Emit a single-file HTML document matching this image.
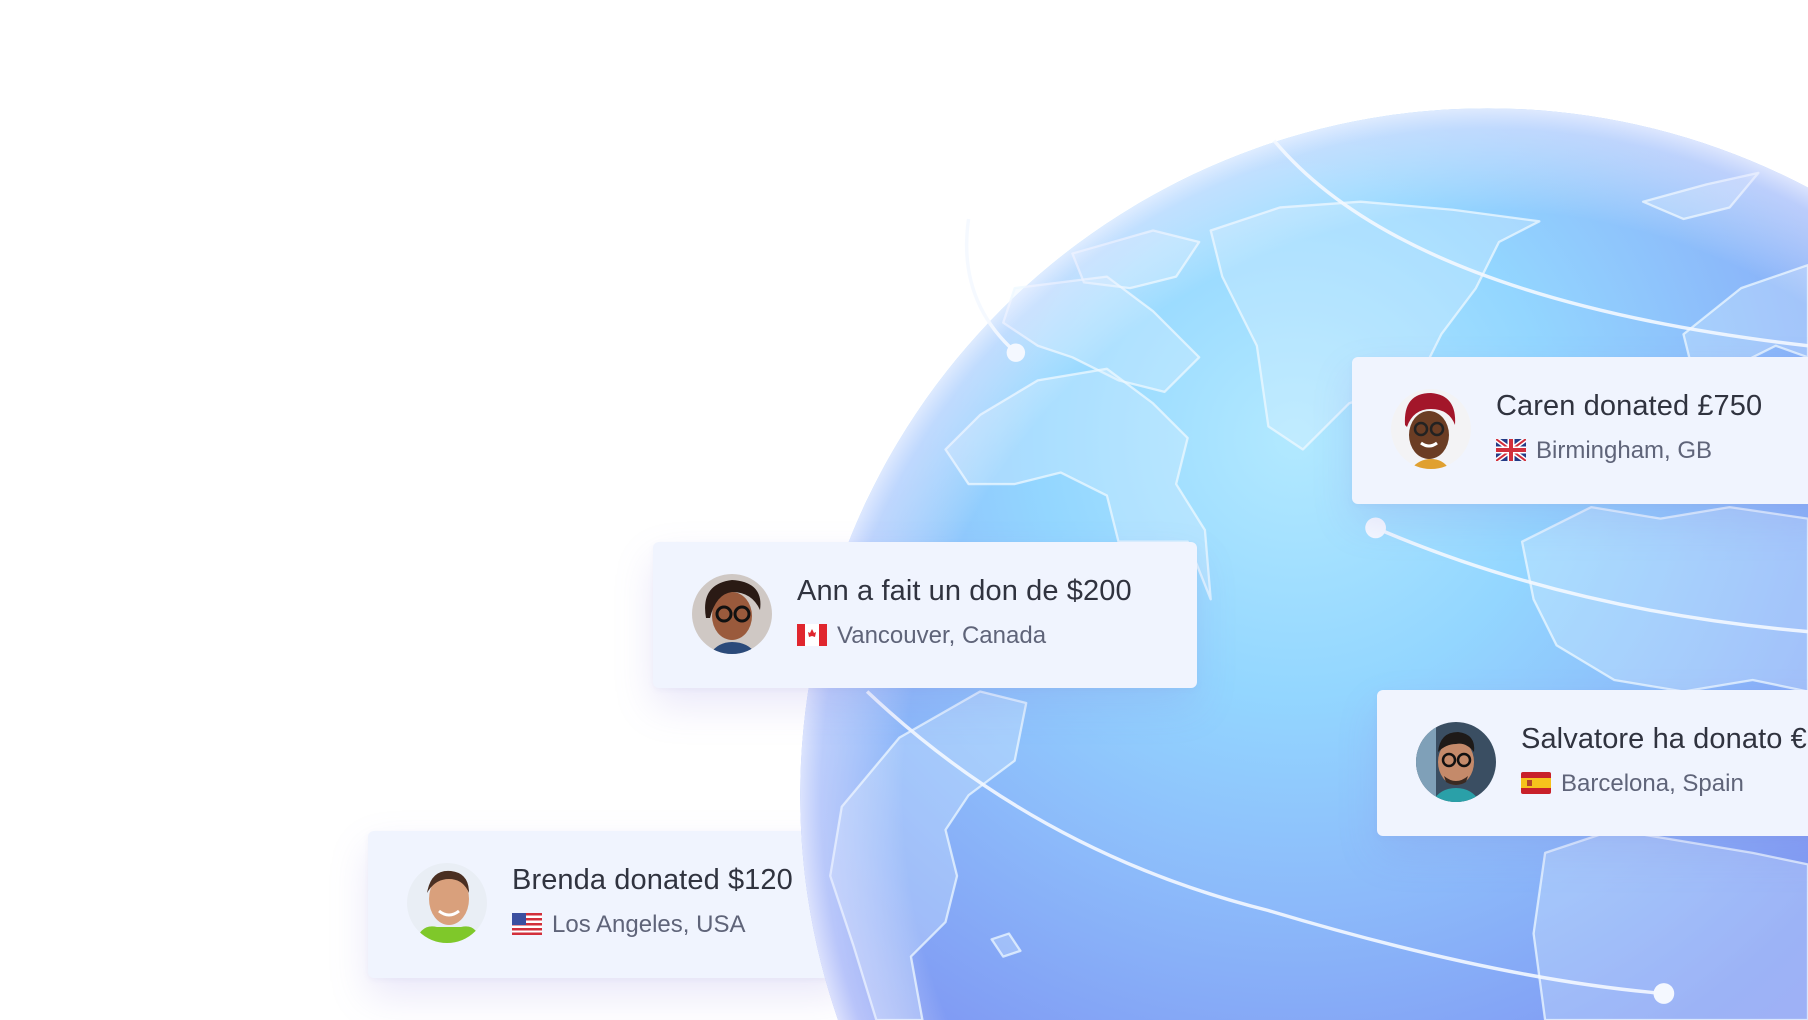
<!DOCTYPE html>
<html><head><meta charset="utf-8">
<style>
*{margin:0;padding:0;box-sizing:border-box}
html,body{width:1808px;height:1020px;overflow:hidden;background:#fff;font-family:"Liberation Sans",sans-serif}
#wrap{position:relative;width:1808px;height:1020px;overflow:hidden}
.card{position:absolute;background:#f0f4fe;border-radius:6px;box-shadow:0 18px 40px rgba(140,130,220,.18),0 2px 6px rgba(140,140,200,.08);}
.av{position:absolute;left:39px;top:32px;width:80px;height:80px;border-radius:50%;overflow:hidden}
.t{position:absolute;left:144px;top:33px;font-size:29px;color:#30333f;white-space:nowrap;letter-spacing:.1px}
.s{position:absolute;left:144px;top:80px;font-size:24px;color:#5f6479;white-space:nowrap}
.s svg{vertical-align:-3px;margin-right:10px}
svg.bg{position:absolute;left:0;top:0}
</style></head><body><div id="wrap">

<div class="card" style="left:368px;top:831px;width:480px;height:147px;z-index:1">
 <div class="av"><svg width="80" height="80" viewBox="0 0 80 80"><rect width="80" height="80" fill="#e9eef5"/><ellipse cx="42" cy="36" rx="20" ry="26" fill="#d9a07c"/><path d="M20 30 Q24 6 44 8 Q62 10 62 30 Q56 16 42 16 Q28 16 20 30Z" fill="#4a2f22"/><path d="M8 80 Q14 60 30 64 L54 64 Q70 60 74 80Z" fill="#7fc82a"/><path d="M32 48 Q42 56 52 48" stroke="#fff" stroke-width="3" fill="none"/></svg></div>
 <div class="t">Brenda donated $120</div>
 <div class="s"><svg width="30" height="22" viewBox="0 0 30 22"><rect width="30" height="22" rx="2" fill="#fff"/><g fill="#d22f3b"><rect y="0" width="30" height="2.5"/><rect y="5" width="30" height="2.5"/><rect y="10" width="30" height="2.5"/><rect y="15" width="30" height="2.5"/><rect y="19.5" width="30" height="2.5"/></g><rect width="14" height="12" fill="#3b4fa0"/></svg>Los Angeles, USA</div>
</div>

<svg class="bg" width="1808" height="1020" viewBox="0 0 1568 885" preserveAspectRatio="none" style="z-index:2">
<defs>
<radialGradient id="g" cx="0.36" cy="0.24" r="0.75">
<stop offset="0" stop-color="#b2e9ff"/>
<stop offset="0.25" stop-color="#93d6ff"/>
<stop offset="0.45" stop-color="#8cbafa"/>
<stop offset="0.68" stop-color="#7f98f3"/>
<stop offset="1" stop-color="#8a8aee"/>
</radialGradient>
<radialGradient id="rim" cx="0.5" cy="0.5" r="0.5">
<stop offset="0.85" stop-color="#fff" stop-opacity="0"/>
<stop offset="0.97" stop-color="#e6e8ff" stop-opacity="0.55"/>
<stop offset="1" stop-color="#f2f3ff" stop-opacity="0.8"/>
</radialGradient>
</defs>
<circle cx="1290" cy="690" r="596" fill="url(#g)"/>
<g fill="#e0f3ff" fill-opacity="0.3" stroke="#eef8ff" stroke-opacity="0.75" stroke-width="2" stroke-linejoin="round">
<path d="M1050 200 L1110 180 L1180 175 L1260 182 L1335 192 L1300 210 L1280 250 L1250 290 L1230 330 L1170 350 L1130 390 L1100 370 L1090 300 L1060 240 Z"/>
<path d="M930 220 L1000 200 L1040 210 L1020 240 L980 250 L940 245Z"/>
<path d="M880 250 L960 240 L1000 270 L1040 310 L1010 340 L970 330 L930 310 L900 300 L870 280Z"/>
<path d="M900 330 L960 320 L1000 350 L1030 380 L1020 420 L1045 460 L1050 520 L1030 470 L1000 470 L970 470 L960 430 L920 410 L880 420 L840 420 L820 390 L850 360Z"/>
<path d="M730 700 L780 640 L850 600 L890 610 L880 660 L840 690 L820 720 L830 760 L820 800 L790 830 L800 885 L760 885 L740 820 L720 760Z"/>
<path d="M1425 175 L1480 160 L1525 150 L1500 180 L1460 190Z"/>
<path d="M1460 290 L1510 250 L1568 230 L1568 310 L1540 300 L1500 320 L1470 330Z"/>
<path d="M1320 470 L1380 440 L1440 450 L1500 440 L1568 450 L1568 600 L1520 590 L1460 600 L1400 590 L1350 560 L1330 520Z"/>
<path d="M1340 740 L1400 720 L1460 730 L1520 740 L1568 750 L1568 885 L1340 885 L1330 810Z"/>
<path d="M860 815 L875 810 L885 825 L870 830Z"/>
</g>
<circle cx="1290" cy="690" r="596" fill="url(#rim)"/>
<g fill="none" stroke="#f4f8ff" stroke-width="3" stroke-opacity="0.9">
<path d="M1105 122 Q1220 260 1568 300"/>
<path d="M1193 458 Q1360 530 1568 548"/>
<path d="M752 600 Q900 740 1100 790 Q1300 850 1443 862"/>
<path d="M840 190 Q830 260 880 305"/>
</g>
<g fill="#f4f8ff"><circle cx="1193" cy="458" r="9"/><circle cx="1443" cy="862" r="9"/><circle cx="881" cy="306" r="8"/></g>
</svg>

<div class="card" style="left:653px;top:542px;width:544px;height:146px;z-index:3">
 <div class="av"><svg width="80" height="80" viewBox="0 0 80 80"><rect width="80" height="80" fill="#cfc8c4"/><ellipse cx="40" cy="42" rx="20" ry="24" fill="#9a5a3c"/><path d="M14 44 Q8 10 40 6 Q72 8 68 36 Q60 18 40 18 Q24 20 18 44Z" fill="#2a1a14"/><circle cx="32" cy="40" r="7" fill="none" stroke="#111" stroke-width="3"/><circle cx="50" cy="40" r="7" fill="none" stroke="#111" stroke-width="3"/><path d="M18 80 Q26 68 40 68 Q56 68 64 80Z" fill="#2b4a7a"/></svg></div>
 <div class="t">Ann a fait un don de $200</div>
 <div class="s"><svg width="30" height="22" viewBox="0 0 30 22"><rect width="30" height="22" rx="2" fill="#fff"/><rect width="8" height="22" fill="#e0262e"/><rect x="22" width="8" height="22" fill="#e0262e"/><path d="M15 5 L17 9 L19 8 L18 13 L15 12 L12 13 L11 8 L13 9Z" fill="#e0262e"/></svg>Vancouver, Canada</div>
</div>

<div class="card" style="left:1352px;top:357px;width:480px;height:147px;z-index:3">
 <div class="av"><svg width="80" height="80" viewBox="0 0 80 80"><rect width="80" height="80" fill="#f3f3f5"/><ellipse cx="38" cy="46" rx="20" ry="24" fill="#6b3d24"/><path d="M14 36 Q12 4 40 4 Q66 6 64 36 Q58 20 40 20 Q22 20 16 38Z" fill="#a3162a"/><circle cx="30" cy="40" r="6" fill="none" stroke="#222" stroke-width="2.5"/><circle cx="46" cy="40" r="6" fill="none" stroke="#222" stroke-width="2.5"/><path d="M30 54 Q38 60 46 54" stroke="#fff" stroke-width="3" fill="none"/><path d="M20 80 Q28 70 40 70 Q52 70 58 80Z" fill="#e0a030"/></svg></div>
 <div class="t">Caren donated £750</div>
 <div class="s"><svg width="30" height="22" viewBox="0 0 30 22"><rect width="30" height="22" rx="2" fill="#233a86"/><path d="M0 0 L30 22 M30 0 L0 22" stroke="#fff" stroke-width="5"/><path d="M0 0 L30 22 M30 0 L0 22" stroke="#d22f3b" stroke-width="2"/><path d="M15 0 V22 M0 11 H30" stroke="#fff" stroke-width="7"/><path d="M15 0 V22 M0 11 H30" stroke="#d22f3b" stroke-width="4"/></svg>Birmingham, GB</div>
</div>

<div class="card" style="left:1377px;top:690px;width:460px;height:146px;z-index:3">
 <div class="av"><svg width="80" height="80" viewBox="0 0 80 80"><rect width="80" height="80" fill="#3a4e62"/><rect x="0" y="0" width="20" height="80" fill="#7fa0b8"/><ellipse cx="40" cy="40" rx="18" ry="23" fill="#c48a6a"/><path d="M22 30 Q24 10 42 10 Q60 12 58 30 Q50 20 40 22 Q30 22 22 30Z" fill="#1e1a18"/><circle cx="33" cy="38" r="6" fill="none" stroke="#111" stroke-width="2.5"/><circle cx="48" cy="38" r="6" fill="none" stroke="#111" stroke-width="2.5"/><path d="M28 54 Q40 64 52 54 L50 60 Q40 66 30 60Z" fill="#3a2a22"/><path d="M16 80 Q24 66 40 66 Q56 66 64 80Z" fill="#2aa0a8"/></svg></div>
 <div class="t">Salvatore ha donato €</div>
 <div class="s"><svg width="30" height="22" viewBox="0 0 30 22"><rect width="30" height="22" rx="2" fill="#c8202a"/><rect y="6" width="30" height="10" fill="#f6c21c"/><rect x="6" y="8" width="5" height="6" fill="#b5452a"/></svg>Barcelona, Spain</div>
</div>

</div></body></html>
